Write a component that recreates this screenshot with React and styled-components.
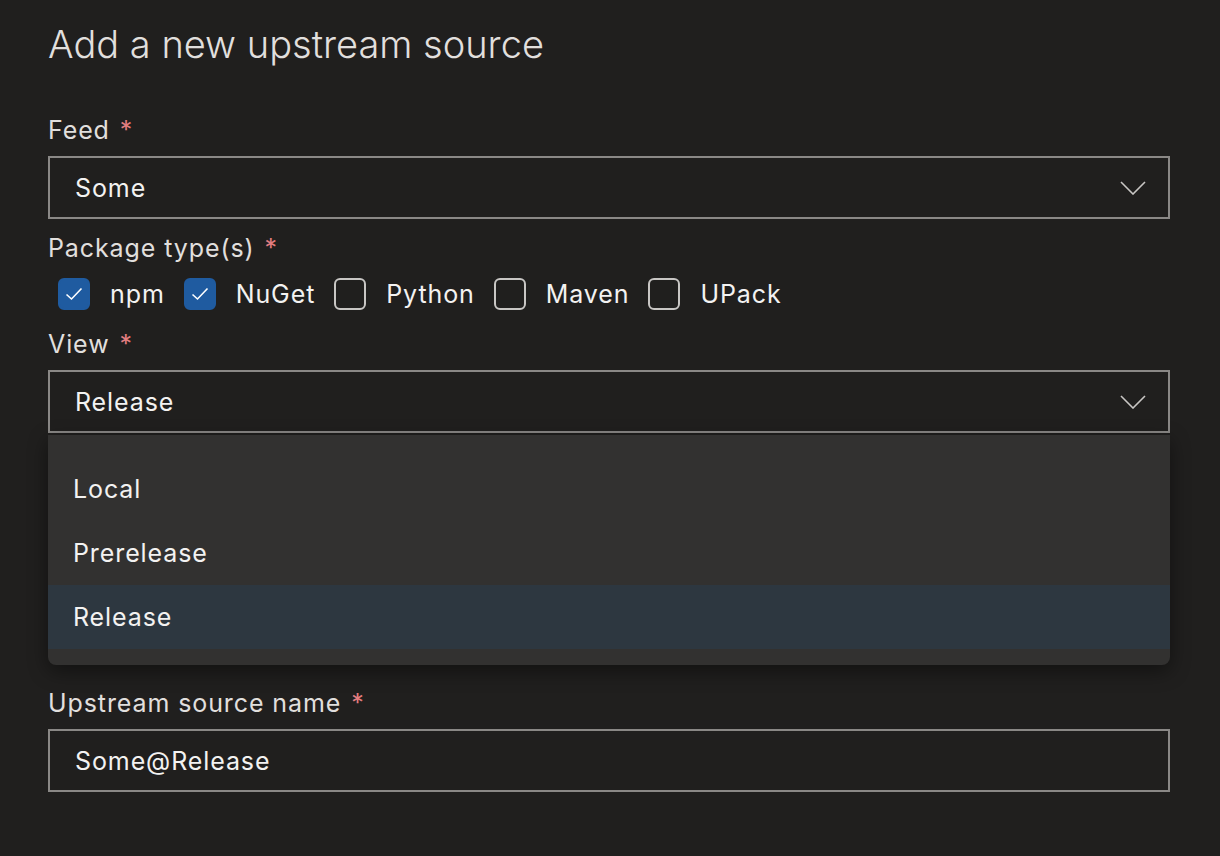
import React from "react";
import styled, { createGlobalStyle } from "styled-components";

const Global = createGlobalStyle`
  body { margin: 0; background: #201f1e; font-family: Inter, "Noto Sans", sans-serif; color: #f3f2f1; }
`;

const Page = styled.div`
  padding: 20px 50px 40px 48px;
  width: 1122px;
`;

const Title = styled.h1`
  margin: 0 0 45px;
  font-size: 38px;
  line-height: 48px;
  font-weight: 300;
  color: #e1dfdd;
`;

const Field = styled.div`
  position: relative;
  margin-bottom: ${(p) => p.gap || 12}px;
`;

const Label = styled.div`
  font-size: 25px;
  letter-spacing: 0.9px;
  line-height: 34px;
  margin-bottom: 9px;
  color: #e1dfdd;
  span { color: #e37d80; margin-left: 10px; }
`;

const Box = styled.div`
  box-sizing: border-box;
  height: 63px;
  border: 2px solid #8a8886;
  display: flex;
  align-items: center;
  justify-content: space-between;
  padding: 0 22px 0 25px;
  font-size: 25px;
  letter-spacing: 0.9px;
  color: #f3f2f1;
`;

const Checks = styled.div`
  display: flex;
  align-items: center;
  height: 40px;
  padding-left: 10px;
  margin-top: 2px;
`;

const Check = styled.label`
  display: flex;
  align-items: center;
  gap: 20px;
  margin-right: 19px;
  font-size: 25px;
  letter-spacing: 0.9px;
`;

const Square = styled.span`
  box-sizing: border-box;
  width: 32px;
  height: 32px;
  border-radius: 6px;
  display: flex;
  align-items: center;
  justify-content: center;
  background: ${(p) => (p.on ? "#1f5ba0" : "transparent")};
  border: 2px solid ${(p) => (p.on ? "#1f5ba0" : "#c8c6c4")};
`;

const Menu = styled.div`
  position: absolute;
  left: 0;
  right: 0;
  top: 108px;
  background: #323130;
  border-radius: 0 0 8px 8px;
  padding: 22px 0 16px;
  box-shadow: 0 6px 20px rgba(0, 0, 0, 0.45);
  z-index: 2;
`;

const Item = styled.div`
  height: 64px;
  display: flex;
  align-items: center;
  padding-left: 25px;
  font-size: 25px;
  letter-spacing: 0.9px;
  background: ${(p) => (p.selected ? "#2d3740" : "transparent")};
`;

const Chevron = () => (
  <svg width="26" height="14" viewBox="0 0 26 14">
    <path d="M1 1 L13 13 L25 1" fill="none" stroke="#c8c6c4" strokeWidth="1.6" />
  </svg>
);

const Tick = () => (
  <svg width="18" height="14" viewBox="0 0 18 14">
    <path d="M1.5 7.5 L6.5 12 L16.5 1.5" fill="none" stroke="#fff" strokeWidth="1.6" />
  </svg>
);

const types = [
  ["npm", true],
  ["NuGet", true],
  ["Python", false],
  ["Maven", false],
  ["UPack", false],
];

export default function App() {
  return (
    <Page>
      <Global />
      <Title>Add a new upstream source</Title>
      <Field>
        <Label>Feed<span>*</span></Label>
        <Box>Some<Chevron /></Box>
      </Field>
      <Field gap={13}>
        <Label>Package type(s)<span>*</span></Label>
        <Checks>
          {types.map(([name, on]) => (
            <Check key={name}>
              <Square on={on}>{on && <Tick />}</Square>
              {name}
            </Check>
          ))}
        </Checks>
      </Field>
      <Field gap={253}>
        <Label>View<span>*</span></Label>
        <Box>Release<Chevron /></Box>
        <Menu>
          <Item>Local</Item>
          <Item>Prerelease</Item>
          <Item selected>Release</Item>
        </Menu>
      </Field>
      <Field>
        <Label>Upstream source name<span>*</span></Label>
        <Box>Some@Release</Box>
      </Field>
    </Page>
  );
}
